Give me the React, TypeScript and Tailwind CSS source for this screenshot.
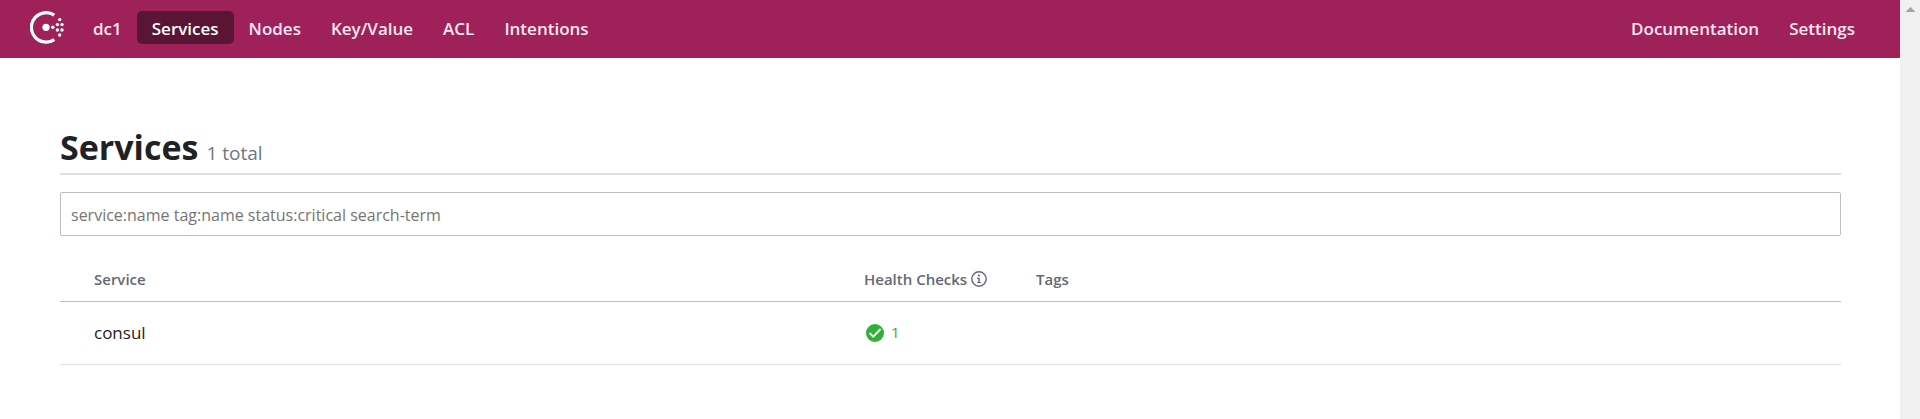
import type { ReactNode } from "react";

function Logo() {
  return (
    <svg viewBox="0 0 34 33" className="h-[33px] w-[34px] fill-white" role="img" aria-label="Consul">
      <path
        d="M24.3 4.2A14.7 14.7 0 1 0 24.3 28.6"
        fill="none"
        stroke="white"
        strokeWidth="3.3"
      />
      <circle cx="16" cy="16.3" r="3.6" />
      <circle cx="22.8" cy="16.3" r="1.7" />
      <circle cx="27.4" cy="13.6" r="1.7" />
      <circle cx="27.4" cy="19" r="1.7" />
      <circle cx="32" cy="13.6" r="1.7" />
      <circle cx="32" cy="19" r="1.7" />
      <circle cx="29.7" cy="8.6" r="1.7" />
      <circle cx="29.7" cy="24" r="1.7" />
    </svg>
  );
}

function NavLink({ children, active = false }: { children: ReactNode; active?: boolean }) {
  return (
    <li>
      <a
        href="#"
        aria-current={active ? "page" : undefined}
        className={
          active
            ? "block rounded-[5px] bg-[#5a1434] px-[15px] pt-[2px] text-[17px] leading-[31px] font-semibold text-white"
            : "block rounded-[5px] px-[15px] pt-[2px] text-[17px] leading-[31px] font-semibold text-[#fce5f0]"
        }
      >
        {children}
      </a>
    </li>
  );
}

function InfoIcon() {
  return (
    <svg viewBox="0 0 16 16" className="size-4" fill="#656873" aria-hidden="true">
      <circle cx="8" cy="8" r="7.2" fill="none" stroke="#656873" strokeWidth="1.4" />
      <circle cx="8" cy="4.5" r="1.1" />
      <path d="M6.2 6.8h2.6v4.1h1.1v1.2H6.2v-1.2h1.1V8H6.2z" />
    </svg>
  );
}

function PassingIcon() {
  return (
    <svg viewBox="0 0 18 18" className="size-[18px]" aria-hidden="true">
      <circle cx="9" cy="9" r="9" fill="#2eb039" />
      <path d="M3.6 9 7.2 12.6 14.6 5" fill="none" stroke="white" strokeWidth="1.8" />
    </svg>
  );
}

export default function App() {
  return (
    <div className="flex min-h-screen bg-white font-['Open_Sans','Noto_Sans',sans-serif]">
      <div className="min-w-0 flex-1">
        <header className="flex h-[58px] items-center bg-[#9e2159] px-[30px] pb-[3px]">
          <a href="#" className="mr-[14px]">
            <Logo />
          </a>
          <nav className="flex flex-1 justify-between">
            <ul className="flex">
              <NavLink>dc1</NavLink>
              <NavLink active>Services</NavLink>
              <NavLink>Nodes</NavLink>
              <NavLink>Key/Value</NavLink>
              <NavLink>ACL</NavLink>
              <NavLink>Intentions</NavLink>
            </ul>
            <ul className="flex">
              <NavLink>Documentation</NavLink>
              <NavLink>Settings</NavLink>
            </ul>
          </nav>
        </header>
        <main className="pt-[67px] pr-[59px] pl-[60px]">
          <h1 className="flex h-[50px] items-baseline gap-2 border-b-2 border-[#dce0e6] text-[34px] leading-[45px] font-bold text-[#1f2124]">
            Services
            <em className="text-[19px] leading-6 font-normal text-[#6f7682] not-italic">1 total</em>
          </h1>
          <input
            type="search"
            aria-label="Search services"
            placeholder="service:name tag:name status:critical search-term"
            className="mt-[17px] block h-11 w-full rounded-[2px] border border-[#babdcc] px-[10px] pt-[2px] text-base text-[#1f2124] outline-none placeholder:text-[#757575]"
          />
          <table className="mt-[21px] w-full table-fixed border-collapse text-left">
            <thead>
              <tr className="h-11 border-b border-[#babdcc] text-[15px] text-[#656873]">
                <th className="pl-[34px] font-semibold">Service</th>
                <th className="w-[172px] font-semibold">
                  <span className="flex items-center gap-1">
                    Health Checks
                    <InfoIcon />
                  </span>
                </th>
                <th className="w-[45.2%] font-semibold">Tags</th>
              </tr>
            </thead>
            <tbody>
              <tr className="h-[63px] border-b border-[#dcdee8]">
                <td className="pl-[34px] text-[17px] font-medium text-[#1f2124]">
                  <a href="#">consul</a>
                </td>
                <td>
                  <span className="flex items-center gap-[7px] pl-0.5 text-[15px] text-[#2eb039]">
                    <PassingIcon />1
                  </span>
                </td>
                <td />
              </tr>
            </tbody>
          </table>
        </main>
      </div>
      <div className="w-5 bg-[#f0f0f0] pt-[7px]" aria-hidden="true">
        <svg viewBox="0 0 20 5" className="h-[5px] w-5" fill="#a3a3a3">
          <path d="M5.5 5 10.5 0 15.5 5z" />
        </svg>
      </div>
    </div>
  );
}
